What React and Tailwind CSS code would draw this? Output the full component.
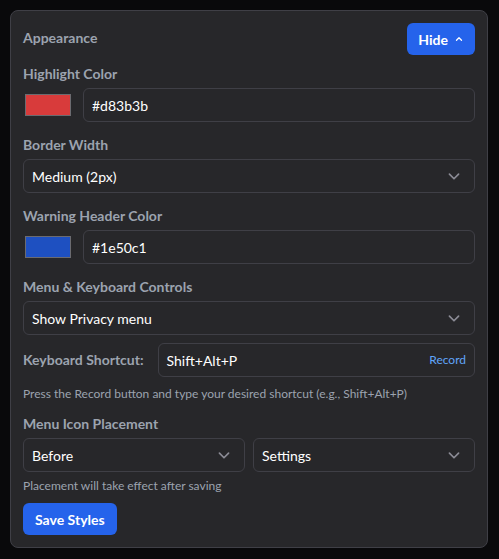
import React from "react";

const Chevron = ({ className = "" }) => (
  <svg width="22" height="22" viewBox="0 0 24 24" fill="none" stroke="currentColor" strokeWidth="1.8" strokeLinecap="round" strokeLinejoin="round" className={className}>
    <path d="M7 10l5 5 5-5" />
  </svg>
);

const Select = ({ value, className = "" }) => (
  <div className={`flex items-center justify-between h-[34px] rounded-md border border-[#3f3f46] bg-[#27272a] pl-2 pr-[9px] text-[14px] text-white ${className}`}>
    <span>{value}</span>
    <Chevron className="text-[#8b8b95]" />
  </div>
);

const Label = ({ children }) => (
  <div className="text-[14px] font-bold text-[#9ca3af] leading-5 whitespace-nowrap">{children}</div>
);

const ColorRow = ({ color, value }) => (
  <div className="flex items-center gap-3">
    <div className="w-[48px] h-[34px] flex items-center shrink-0 pl-[2px]">
      <div className="w-[46px] h-[22px] border border-[#6b6b70]" style={{ background: color }} />
    </div>
    <div className="flex-1 h-[34px] rounded-md border border-[#3f3f46] flex items-center px-2 text-[14px] text-white">{value}</div>
  </div>
);

export default function App() {
  return (
    <div className="min-h-[559px] bg-[#09090b] p-[10px] pb-[11px]" style={{ fontFamily: 'Lato, "Noto Sans", sans-serif' }}>
      <div className="w-[478px] h-[538px] rounded-lg border border-[#3f3f46] bg-[#27272a] px-3 pt-3">
        <div className="flex items-center justify-between">
          <div className="text-[14px] font-bold text-[#9ca3af] -mt-[4px]">Appearance</div>
          <button className="flex items-center gap-1.5 h-[32px] px-[11px] rounded-md bg-[#2563eb] text-white text-[14px] font-bold">
            Hide
            <svg width="10" height="10" viewBox="0 0 24 24" fill="none" stroke="currentColor" strokeWidth="3" strokeLinecap="round" strokeLinejoin="round"><path d="M6 15l6-6 6 6" /></svg>
          </button>
        </div>

        <div className="mt-[9px]">
          <Label>Highlight Color</Label>
          <div className="mt-[4px]"><ColorRow color="#d83b3b" value="#d83b3b" /></div>
        </div>

        <div className="mt-[13px]">
          <Label>Border Width</Label>
          <Select value="Medium (2px)" className="mt-[4px]" />
        </div>

        <div className="mt-[13px]">
          <Label>Warning Header Color</Label>
          <div className="mt-[4px]"><ColorRow color="#1e50c1" value="#1e50c1" /></div>
        </div>

        <div className="mt-[13px]">
          <Label>Menu &amp; Keyboard Controls</Label>
          <Select value="Show Privacy menu" className="mt-[4px]" />
        </div>

        <div className="mt-[8px] flex items-center gap-[14px]">
          <Label>Keyboard Shortcut:</Label>
          <div className="flex-1 h-[34px] rounded-md border border-[#3f3f46] flex items-center justify-between pl-2 pr-2 text-[14px] text-white">
            <span>Shift+Alt+P</span>
            <span className="text-[12px] text-[#60a5fa]">Record</span>
          </div>
        </div>
        <div className="mt-[8px] text-[12px] text-[#9ca3af]">Press the Record button and type your desired shortcut (e.g., Shift+Alt+P)</div>

        <div className="mt-[11px]">
          <Label>Menu Icon Placement</Label>
          <div className="mt-[4px] grid grid-cols-2 gap-2">
            <Select value="Before" />
            <Select value="Settings" />
          </div>
        </div>
        <div className="mt-[5px] text-[12px] text-[#9ca3af]">Placement will take effect after saving</div>

        <button className="mt-[8px] h-[32px] px-3 rounded-md bg-[#2563eb] text-white text-[14px] font-bold">Save Styles</button>
      </div>
    </div>
  );
}
